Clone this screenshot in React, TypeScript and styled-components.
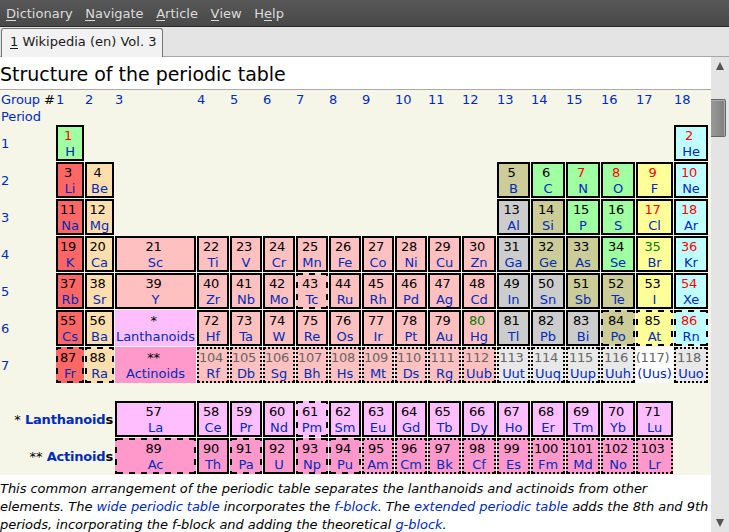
import React from 'react';
import styled, { createGlobalStyle } from 'styled-components';

const GlobalStyle = createGlobalStyle`
  * { box-sizing: border-box; }
  body { margin: 0; overflow: hidden; background: #fff; }
`;

const Window = styled.div`
  width: 729px;
  height: 532px;
  display: flex;
  flex-direction: column;
  overflow: hidden;
  font-family: "DejaVu Sans", sans-serif;
  font-size: 13px;
  line-height: 16px;
  color: #000;
  white-space: nowrap;
`;

const MenuBar = styled.nav`
  height: 27px;
  flex: none;
  display: flex;
  gap: 12.6px;
  padding: 6px 6px 0;
  color: #dcdcdc;
  background: linear-gradient(#585858, #484848);
  border-bottom: 1px solid #282828;
`;

const MenuItem = styled.span``;

const Mnemonic = styled.span`
  display: inline-block;
  height: 15px;
  border-bottom: 1px solid currentColor;
`;

const TabStrip = styled.div`
  height: 30px;
  flex: none;
  display: flex;
  padding: 1px 0 0 1px;
  background: linear-gradient(#e4e4e4 0 29px, #a8a8a8 29px);
`;

const Tab = styled.div`
  width: 162px;
  height: 29px;
  padding: 5px 0 0 8px;
  color: #1a1a1a;
  background: #f2f2f2;
  border: 1px solid #747474;
  border-bottom: 0;
  border-radius: 3px 3px 0 0;
`;

const Body = styled.div`
  flex: 1;
  display: flex;
  min-height: 0;
`;

const Article = styled.main`
  width: 711px;
  display: flex;
  flex-direction: column;
`;

const Title = styled.h1`
  margin: 0;
  height: 33px;
  flex: none;
  padding-top: 5px;
  font-size: 19px;
  line-height: 24px;
  letter-spacing: -0.02px;
  font-weight: 400;
  border-bottom: 1px solid #aaa;
`;

const Sheet = styled.section`
  height: 385px;
  flex: none;
  background: #f6f6e8;
  color: #002bb8;
`;

const WIDTHS = [28, 29, 81, 32, 32, 32, 32, 32, 32, 32, 33, 34, 33, 34, 34, 34, 37, 34];
const COLUMNS = '55px ' + WIDTHS.map((w) => w + 'px').join(' ');

const HeaderRow = styled.div`
  display: grid;
  grid-template-columns: ${COLUMNS};
  column-gap: 1px;
  height: 35px;
  padding-top: 2px;
`;

const Corner = styled.div`
  padding-left: 1px;
  letter-spacing: -0.12px;
  line-height: 16.5px;
`;

const Black = styled.span`
  color: #000;
`;

const Row = styled.div<{ $spaced?: boolean }>`
  display: grid;
  grid-template-columns: ${COLUMNS};
  column-gap: 1px;
  height: 36px;
  margin-bottom: 1px;
  margin-top: ${(p) => (p.$spaced ? '18px' : '0')};
`;

const Period = styled.div`
  padding: 11px 0 0 1px;
`;

const SeriesLabel = styled.div`
  grid-column: 1 / 4;
  padding-top: 11px;
  padding-right: 1px;
  text-align: right;
  b { letter-spacing: -0.2px; }
`;

/* s: solid, d: dashed, o: dotted, n: none */
type Edge = 's' | 'd' | 'o' | 'n';

/* Start of the first stroke, so that the pattern is centred between the 2px corners. */
const patternStart = (length: number, unit: number) => {
  const inner = length - 4;
  const rest = inner % unit;
  let even = Math.floor(inner / unit) % 2 === 0;
  if (rest) even = !even;
  let offset = 0;
  if (even) offset = rest ? unit - rest + rest / 2 : unit / 2;
  else if (rest) offset = (unit - rest) / 2;
  return 2 - Math.floor(offset);
};

const brokenEdge = (width: number, unit: number) => {
  const x = patternStart(width, unit);
  const y = patternStart(36, unit);
  const h = 'linear-gradient(90deg, #000 50%, transparent 50%)';
  const v = 'linear-gradient(#000 50%, transparent 50%)';
  const c = 'linear-gradient(#000, #000)';
  const p = unit * 2;
  return `background-image: ${[c, c, c, c, h, h, v, v].join(', ')};
    background-size: 2px 2px, 2px 2px, 2px 2px, 2px 2px, ${p}px 2px, ${p}px 2px, 2px ${p}px, 2px ${p}px;
    background-position: 0 0, 100% 0, 0 100%, 100% 100%, ${x}px 0, ${x}px 100%, 0 ${y}px, 100% ${y}px;
    background-repeat: no-repeat, no-repeat, no-repeat, no-repeat, repeat-x, repeat-x, repeat-y, repeat-y;`;
};

const Cell = styled.div<{ $col: number; $fill: string; $edge: Edge }>`
  grid-column: ${(p) => p.$col + 1};
  height: 36px;
  padding: 3px 0 0;
  display: flex;
  flex-direction: column;
  align-items: center;
  background-color: ${(p) => p.$fill};
  ${(p) => p.$edge === 's' && 'box-shadow: inset 0 0 0 2px #000;'}
  ${(p) => p.$edge === 'd' && brokenEdge(WIDTHS[p.$col - 1], 6)}
  ${(p) => p.$edge === 'o' && brokenEdge(WIDTHS[p.$col - 1], 2)}
`;

const Num = styled.span<{ $color: string }>`
  height: 16px;
  padding-right: 4px;
  letter-spacing: -0.27px;
  color: ${(p) => p.$color};
`;

const Sym = styled.span`
  height: 16px;
  letter-spacing: -0.05px;
`;

const Caption = styled.p`
  margin: 0;
  padding-top: 5px;
  font-style: italic;
  line-height: 18px;
  letter-spacing: -0.037px;
  a { color: #002bb8; }
`;

const ScrollBar = styled.aside`
  width: 18px;
  display: flex;
  flex-direction: column;
  background: #e4e4e4;
`;

const Arrow = styled.svg`
  display: block;
  margin: 5px 0 5px 5px;
`;

const Thumb = styled.div`
  width: 15px;
  height: 38px;
  margin-top: 24px;
  margin-bottom: auto;
  background: linear-gradient(90deg, #9a9a9a, #808080);
  border: 1px solid #666;
  border-left: 0;
  border-radius: 0 2px 2px 0;
  box-shadow: inset -1px 1px 0 #aaa;
`;

const FILL: Record<string, string> = {
  k: '#ff6666', e: '#ffdead', t: '#ffc0c0', l: '#ffbfff', a: '#ff99cc',
  m: '#cccc99', p: '#cccccc', g: '#a0ffa0', h: '#ffff99', n: '#c0ffff',
  u: '#e8e8e8', w: '#ffffff',
};
const INK: Record<string, string> = { b: '#000', r: '#f00', v: '#008000', x: '#666' };

/* Each entry: column, number, symbol, fill key, edge style, ink key */
type Item = [number, string, string, string, Edge?, string?];

const run = (start: number, first: number, names: string, fill: string, edge: Edge = 's', ink = 'b'): Item[] =>
  names.split(' ').map((s, i) => [start + i, String(first + i), s, fill, edge, ink]);

const periods: Item[][] = [
  [[1, '1', 'H', 'g', 's', 'r'], [18, '2', 'He', 'n', 's', 'r']],
  [[1, '3', 'Li', 'k'], [2, '4', 'Be', 'e'], [13, '5', 'B', 'm'], [14, '6', 'C', 'g'],
    [15, '7', 'N', 'g', 's', 'r'], [16, '8', 'O', 'g', 's', 'r'], [17, '9', 'F', 'h', 's', 'r'], [18, '10', 'Ne', 'n', 's', 'r']],
  [[1, '11', 'Na', 'k'], [2, '12', 'Mg', 'e'], [13, '13', 'Al', 'p'], [14, '14', 'Si', 'm'],
    [15, '15', 'P', 'g'], [16, '16', 'S', 'g'], [17, '17', 'Cl', 'h', 's', 'r'], [18, '18', 'Ar', 'n', 's', 'r']],
  [[1, '19', 'K', 'k'], [2, '20', 'Ca', 'e'], ...run(3, 21, 'Sc Ti V Cr Mn Fe Co Ni Cu Zn', 't'),
    [13, '31', 'Ga', 'p'], [14, '32', 'Ge', 'm'], [15, '33', 'As', 'm'], [16, '34', 'Se', 'g'],
    [17, '35', 'Br', 'h', 's', 'v'], [18, '36', 'Kr', 'n', 's', 'r']],
  [[1, '37', 'Rb', 'k'], [2, '38', 'Sr', 'e'], ...run(3, 39, 'Y Zr Nb Mo', 't'), [7, '43', 'Tc', 't', 'd'],
    ...run(8, 44, 'Ru Rh Pd Ag Cd', 't'), [13, '49', 'In', 'p'], [14, '50', 'Sn', 'p'], [15, '51', 'Sb', 'm'],
    [16, '52', 'Te', 'm'], [17, '53', 'I', 'h'], [18, '54', 'Xe', 'n', 's', 'r']],
  [[1, '55', 'Cs', 'k'], [2, '56', 'Ba', 'e'], [3, '*', 'Lanthanoids', 'l', 'n'],
    ...run(4, 72, 'Hf Ta W Re Os Ir Pt Au', 't'), [12, '80', 'Hg', 't', 's', 'v'],
    ...run(13, 81, 'Tl Pb Bi', 'p'), [16, '84', 'Po', 'm', 'd'], [17, '85', 'At', 'h', 'd'], [18, '86', 'Rn', 'n', 'd', 'r']],
  [[1, '87', 'Fr', 'k', 'd'], [2, '88', 'Ra', 'e', 'd'], [3, '**', 'Actinoids', 'a', 'n'],
    ...run(4, 104, 'Rf Db Sg Bh Hs Mt Ds Rg Uub', 't', 'o', 'x'),
    ...run(13, 113, 'Uut Uuq Uup Uuh', 'u', 'o', 'x'), [17, '(117)', '(Uus)', 'w', 'n', 'x'], [18, '118', 'Uuo', 'u', 'o', 'x']],
];

const lanthanoids: Item[] = [
  ...run(3, 57, 'La Ce Pr Nd', 'l'), [7, '61', 'Pm', 'l', 'd'], ...run(8, 62, 'Sm Eu Gd Tb Dy Ho Er Tm Yb Lu', 'l'),
];
const actinoids: Item[] = [
  [3, '89', 'Ac', 'a', 'd'], [4, '90', 'Th', 'a'], [5, '91', 'Pa', 'a', 'd'], [6, '92', 'U', 'a'],
  ...run(7, 93, 'Np Pu', 'a', 'd'), ...run(9, 95, 'Am Cm Bk Cf Es Fm Md No Lr', 'a', 'o'),
];

const Cells = ({ items }: { items: Item[] }) => (
  <>
    {items.map(([col, num, sym, fill, edge = 's', ink = 'b']) => (
      <Cell key={num} $col={col} $fill={FILL[fill]} $edge={edge}>
        <Num $color={INK[ink]}>{num}</Num>
        <Sym>{sym}</Sym>
      </Cell>
    ))}
  </>
);

export default function App() {
  return (
    <Window>
      <GlobalStyle />
      <MenuBar>
        <MenuItem><Mnemonic>D</Mnemonic>ictionary</MenuItem>
        <MenuItem><Mnemonic>N</Mnemonic>avigate</MenuItem>
        <MenuItem><Mnemonic>A</Mnemonic>rticle</MenuItem>
        <MenuItem><Mnemonic>V</Mnemonic>iew</MenuItem>
        <MenuItem>H<Mnemonic>e</Mnemonic>lp</MenuItem>
      </MenuBar>
      <TabStrip>
        <Tab><Mnemonic>1</Mnemonic> Wikipedia (en) Vol. 3</Tab>
      </TabStrip>
      <Body>
        <Article>
          <Title>Structure of the periodic table</Title>
          <Sheet>
            <HeaderRow>
              <Corner>Group <Black>#</Black><br />Period</Corner>
              {WIDTHS.map((_, i) => <span key={i}>{i + 1}</span>)}
            </HeaderRow>
            {periods.map((items, i) => (
              <Row key={i}>
                <Period>{i + 1}</Period>
                <Cells items={items} />
              </Row>
            ))}
            <Row $spaced>
              <SeriesLabel><Black>* </Black><b>Lanthanoid<Black>s</Black></b></SeriesLabel>
              <Cells items={lanthanoids} />
            </Row>
            <Row>
              <SeriesLabel><Black>** </Black><b>Actinoid<Black>s</Black></b></SeriesLabel>
              <Cells items={actinoids} />
            </Row>
          </Sheet>
          <Caption>
            This common arrangement of the periodic table separates the lanthanoids and actinoids from other<br />
            elements. The <a>wide periodic table</a> incorporates the <a>f-block</a>. The <a>extended periodic table</a> adds the 8th and 9th<br />
            periods, incorporating the f-block and adding the theoretical <a>g-block</a>.
          </Caption>
        </Article>
        <ScrollBar>
          <Arrow width="8" height="8" viewBox="0 0 8 8"><path d="M4 0L8 8H0Z" fill="#555" /></Arrow>
          <Thumb />
          <Arrow width="8" height="8" viewBox="0 0 8 8"><path d="M0 0H8L4 8Z" fill="#555" /></Arrow>
        </ScrollBar>
      </Body>
    </Window>
  );
}
